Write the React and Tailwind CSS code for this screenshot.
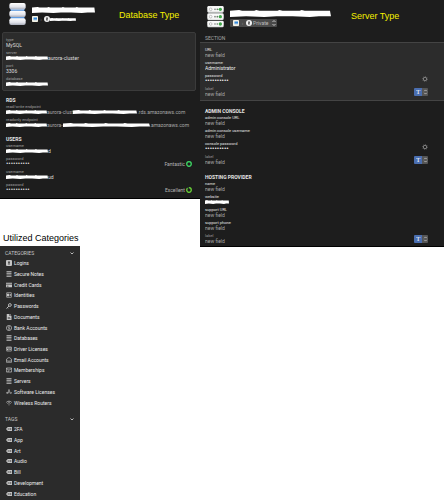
const CATEGORIES = [
  ['Logins', 'login'],
  ['Secure Notes', 'rows'],
  ['Credit Cards', 'card'],
  ['Identities', 'identity'],
  ['Passwords', 'key'],
  ['Documents', 'document'],
  ['Bank Accounts', 'bank'],
  ['Databases', 'rows'],
  ['Driver Licenses', 'license'],
  ['Email Accounts', 'email'],
  ['Memberships', 'membership'],
  ['Servers', 'rows'],
  ['Software Licenses', 'software'],
  ['Wireless Routers', 'wifi'],
];

const TAGS = ['2FA', 'App', 'Art', 'Audio', 'Bill', 'Development', 'Education'];

const ICONS = {
  login: (
    <path fill="currentColor" fillRule="evenodd" d="M2 0h8a2 2 0 012 2v8a2 2 0 01-2 2H2a2 2 0 01-2-2V2a2 2 0 012-2zm4 2.5A2 2 0 005 6v3.5h2V6a2 2 0 00-1-3.500z" />
  ),
  rows: (
    <path fill="currentColor" opacity="0.75" d="M1 0h10v3H1zM1 4h10v2H1zM1 7h10v2H1zM1 10h10v2H1z" />
  ),
  card: <path fill="currentColor" fillRule="evenodd" d="M0 1.500h12V3.500H0zM0 5h12v5.500H0zM1.500 7.500V9H5V7.500z" />,
  identity: (
    <>
      <rect x="0.700" y="1.500" width="10.600" height="9" rx="1" fill="none" stroke="currentColor" strokeWidth="1.400" />
      <path fill="currentColor" d="M2 3.500h4v5H2zM7 4h3v1.300H7zM7 6.500h3v1.300H7z" />
    </>
  ),
  key: (
    <>
      <circle cx="7.800" cy="4" r="2.800" fill="none" stroke="currentColor" strokeWidth="1.800" />
      <path d="M6 6L1 11M3 9.500l1.500 1.300" stroke="currentColor" strokeWidth="1.800" fill="none" />
    </>
  ),
  document: <path fill="currentColor" fillRule="evenodd" d="M1.500 0H7v4h4v8H1.500zM8 0l3 3H8zM3.500 6v1H8V6zm0 2.500v1H9v-1z" />,
  bank: (
    <>
      <circle cx="6" cy="6" r="5.200" fill="none" stroke="currentColor" strokeWidth="1.400" />
      <path d="M8 4.200C7 3 4.200 3.300 4.400 4.800c.2 1.500 3.300 1 3.300 2.600 0 1.400-2.700 1.500-3.700.4M6 2.300v7.400" fill="none" stroke="currentColor" strokeWidth="1.100" />
    </>
  ),
  license: (
    <>
      <rect x="0.700" y="2" width="10.600" height="8" rx="1" fill="none" stroke="currentColor" strokeWidth="1.400" />
      <path fill="currentColor" d="M1 3h10v2H1zM2 6h3v2.500H2zM6.500 6.500H10v1.500H6.500z" />
    </>
  ),
  email: (
    <path d="M.8 10.500V6C1.500 3 4 1.300 6 1.300S10.500 3 11.200 6v4.500zM1 6.500c2 2.500 8 2.500 10 0" fill="none" stroke="currentColor" strokeWidth="1.400" />
  ),
  membership: (
    <path d="M.8 2h10.400v8H.8zM1 3l5 3.500L11 3M3 8.300h3" fill="none" stroke="currentColor" strokeWidth="1.400" />
  ),
  software: (
    <path d="M6.800 1L2 10M5.200 1L10 10M0 7.500h7M9.500 7.500H12" fill="none" stroke="currentColor" strokeWidth="1.300" />
  ),
  wifi: (
    <path d="M.6 4.800C3.500 1.500 8.500 1.500 11.400 4.800M2.800 7C4.700 5 7.300 5 9.200 7M5 9.600h2" fill="none" stroke="currentColor" strokeWidth="1.500" />
  ),
  tag: (
    <path fill="currentColor" fillRule="evenodd" d="M3.500 2H12v8H3.500L0 6zM3.500 5v2h2V5zM7 4.500v1h3.500v-1zM7 6.500v1h3.500v-1z" />
  ),
};

function Icon({ name }) {
  return (
    <svg className="w-[6px] h-[6px] shrink-0 text-[#c4c4c4]" viewBox="0 0 12 12" aria-hidden="true">
      {ICONS[name]}
    </svg>
  );
}

/* White marker stroke that hides a private value */
function Redaction({ className }) {
  return (
    <svg className={`shrink-0 ${className}`} viewBox="0 0 100 10" preserveAspectRatio="none" aria-hidden="true">
      <path fill="#fff" d="M0 1l9-1 3 1 12 0 2-1 3 1 18 0 2-1 3 1 17 0 2-1 3 1 18 0 7 0 1 8-12 0-9 1-17-1-16 0-12 1-18-1-17 1z" />
    </svg>
  );
}

function Chevrons({ className }) {
  return (
    <svg className={`pointer-events-none ${className}`} viewBox="0 0 6 8" fill="none" stroke="#c8c8c8" strokeWidth="1" aria-hidden="true">
      <path d="M1.500 3L3 1.500 4.500 3M1.500 5L3 6.500 4.500 5" />
    </svg>
  );
}

function VaultIcon() {
  return (
    <svg className="w-[6px] h-[6px] shrink-0" viewBox="0 0 12 12" aria-hidden="true">
      <rect width="12" height="12" rx="1.500" fill="#f5f2e4" />
      <rect x="3" y="3" width="7" height="4.500" fill="#3388dc" />
      <rect x="3" y="7.500" width="7" height="1.500" fill="#b7d4ee" />
    </svg>
  );
}

function KeyholeIcon() {
  return (
    <svg className="w-[6px] h-[6px] shrink-0" viewBox="0 0 12 12" aria-hidden="true">
      <circle cx="6" cy="6" r="6" fill="#f2f2f2" />
      <path fill="#333" d="M4.500 3h3v2.500L7 6.500 7.500 9h-3V6.500l.5-1-.5-.5z" />
    </svg>
  );
}

function DatabaseLogo() {
  return (
    <svg className="w-[17px] h-[22px] shrink-0" viewBox="0 0 51 66" aria-hidden="true">
      <defs>
        <linearGradient id="disk" x1="0" x2="0" y1="0" y2="1">
          <stop offset="0" stopColor="#fff" />
          <stop offset="0.600" stopColor="#e2e4ec" />
          <stop offset="1" stopColor="#a9adba" />
        </linearGradient>
      </defs>
      <path fill="#4c8fdc" d="M5 14h41v44H5z" />
      <path fill="#9fc4ee" d="M5 18h41v3H5zM5 40h41v3H5z" />
      <rect x="1" y="0" width="49" height="19" rx="6" fill="url(#disk)" />
      <rect x="1" y="23" width="49" height="19" rx="6" fill="url(#disk)" />
      <rect x="1" y="46" width="49" height="20" rx="6" fill="url(#disk)" />
    </svg>
  );
}

function ServerLogo() {
  return (
    <svg className="w-[17px] h-[22px] shrink-0" viewBox="0 0 51 66" aria-hidden="true">
      {[0, 22, 44].map((y) => (
        <g key={y}>
          <rect x="1" y={y} width="49" height="20" rx="4" fill="#e4e6e5" />
          <rect x="2" y={y + 1} width="47" height="15" rx="4" fill="#fafafa" />
          <circle cx="11" cy={y + 10} r="4" fill="#fff" stroke="#a5a5a5" strokeWidth="2" />
          <circle cx="24" cy={y + 10} r="2.500" fill="#7d7d7d" />
          <circle cx="31" cy={y + 10} r="2.500" fill="#5f7f60" />
          <circle cx="40" cy={y + 10} r="5" fill="#3fa648" />
        </g>
      ))}
    </svg>
  );
}

function StrengthRing({ level }) {
  return (
    <svg className="w-[6px] h-[6px]" viewBox="0 0 12 12" fill="none" aria-hidden="true">
      <circle cx="6" cy="6" r="4.600" stroke="#24502f" strokeWidth="2.400" />
      <circle cx="6" cy="6" r="4.600" stroke={level === 'Fantastic' ? '#3ed765' : '#6fd336'} strokeWidth="2.400" pathLength="100" strokeDasharray={level === 'Fantastic' ? '100 0' : '82 18'} transform="rotate(-90 6 6)" />
    </svg>
  );
}

/* Read-only label + value pair */
function Field({ label, strength, children }) {
  return (
    <div className="pb-[2px]">
      <dt className="text-[4px] leading-[5px] text-[#a2a2a2]">{label}</dt>
      <dd className="flex items-center h-[6px] text-[5px] leading-[6px] text-[#dedede] whitespace-nowrap">
        {children}
        {strength && (
          <span className="ml-auto flex items-center gap-[1px] text-[#b4b4b4]">
            {strength}
            <StrengthRing level={strength} />
          </span>
        )}
      </dd>
    </div>
  );
}

/* Editable field of the server form */
function EditField({ id, label, value, type = 'text', custom }) {
  return (
    <div className="flex items-center pb-[2px]">
      <div className="flex-1 min-w-0">
        <label htmlFor={id} className={`block text-[4px] leading-[5px] ${custom ? 'text-[#9a9a9a]' : 'text-[#e4e4e4]'}`}>
          {label}
        </label>
        {value === 'redacted' ? (
          <div id={id} className="flex items-center h-[6px]">
            <Redaction className="w-[24px] h-[4px]" />
          </div>
        ) : (
          <input
            id={id}
            type="text"
            defaultValue={value}
            placeholder="new field"
            className={`block w-full h-[6px] p-0 bg-transparent leading-[6px] text-[#f0f0f0] placeholder:text-[#a8a8a8] outline-none ${type === 'password' ? 'text-[7px]' : 'text-[5px]'}`}
          />
        )}
      </div>
      {type === 'password' && (
        <button type="button" aria-label={`Options for ${label}`} className="mr-4 shrink-0">
          <svg className="w-[6px] h-[6px]" viewBox="0 0 12 12" fill="none" stroke="#8c8c8c" aria-hidden="true">
            <circle cx="6" cy="6" r="3.500" strokeWidth="1.800" />
            <circle cx="6" cy="6" r="5" strokeWidth="1.200" strokeDasharray="1.500 2.400" />
          </svg>
        </button>
      )}
      {custom && (
        <div className="relative mr-4 w-[14px] h-2 shrink-0 rounded-[1px] overflow-hidden">
          <select aria-label={`Type of ${id}`} className="block appearance-none w-full h-full pl-[2px] bg-linear-to-r from-[#4a6eb0] from-60% to-[#555] to-60% font-['Liberation_Serif',serif] text-[7px] leading-[8px] text-white">
            <option>T</option>
          </select>
          <Chevrons className="absolute right-0 top-0 w-[5px] h-2" />
        </div>
      )}
    </div>
  );
}

function SectionTitle({ children }) {
  return <h3 className="text-[5px] leading-[8px] font-bold text-[#e6e6e6]">{children}</h3>;
}

const DOTS = '••••••••••';

function DatabasePanel() {
  return (
    <section className="bg-[#1d1d1d] pb-[3px] border-b border-black">
      <header className="flex items-start pt-[3px] pl-[9px] h-8">
        <DatabaseLogo />
        <div className="ml-[6px] pt-1">
          <Redaction className="w-[63px] h-[6px]" />
          <div className="flex items-center mt-[3px]">
            <VaultIcon />
            <span className="w-[6px] text-center text-[5px] leading-[6px] text-[#777]">›</span>
            <KeyholeIcon />
            <Redaction className="w-[26px] h-[3px]" />
          </div>
        </div>
        <h2 className="ml-6 pt-[6px] text-[9px] leading-[12px] text-[#f4f000] font-['Liberation_Sans',sans-serif] whitespace-nowrap">Database Type</h2>
      </header>

      <dl className="ml-[2px] mr-1 px-[3px] pt-1 pb-[1px] rounded-[2px] bg-[#2c2c2c] border border-[#3b3b3b]">
        <Field label="type">MySQL</Field>
        <Field label="server">
          <Redaction className="w-[42px] h-[4px]" />
          aurora-cluster
        </Field>
        <Field label="port">3306</Field>
        <Field label="database">
          <Redaction className="w-[42px] h-[4px]" />
        </Field>
      </dl>

      <div className="pl-[6px] pr-2 pt-[5px]">
        <SectionTitle>RDS</SectionTitle>
        <dl>
          <Field label="read/write endpoint">
            <Redaction className="w-[41px] h-[4px]" />
            <span className="text-[#a8a8a8]">aurora-clust</span>
            <Redaction className="w-[64px] h-[4px]" />
            <span className="text-[#a8a8a8]">.rds.amazonaws.com</span>
          </Field>
          <Field label="readonly endpoint">
            <Redaction className="w-[41px] h-[4px]" />
            <span className="text-[#a8a8a8]">aurora-</span>
            <Redaction className="w-[87px] h-[4px]" />
            <span className="text-[#a8a8a8]">.amazonaws.com</span>
          </Field>
        </dl>
        <div className="pt-[5px]">
          <SectionTitle>USERS</SectionTitle>
        </div>
        <dl>
          <Field label="username">
            <Redaction className="w-[42px] h-[4px]" />d
          </Field>
          <Field label="password" strength="Fantastic">
            <span className="text-[7px] leading-[6px]">{DOTS}</span>
          </Field>
          <Field label="username">
            <Redaction className="w-[42px] h-[4px]" />ud
          </Field>
          <Field label="password" strength="Excellent">
            <span className="text-[7px] leading-[6px]">{DOTS}</span>
          </Field>
        </dl>
      </div>
    </section>
  );
}

function ServerPanel() {
  return (
    <section className="bg-[#1d1d1d] border-b border-black">
      <header className="flex items-start pt-[6px] pl-[7px]">
        <ServerLogo />
        <div className="ml-[6px] pt-1">
          <Redaction className="w-[101px] h-[7px]" />
          <div className="relative flex items-center mt-[2px] w-[47px] h-2 rounded-[1px] bg-[#4a4a4a]">
            <span className="absolute left-[3px] flex items-center pointer-events-none">
              <VaultIcon />
              <span className="w-[7px] text-center text-[5px] leading-[6px] text-[#888]">›</span>
              <KeyholeIcon />
            </span>
            <select aria-label="Vault" className="block appearance-none w-full h-full pl-[23px] bg-transparent text-[5px] leading-[8px] text-[#bdbdbd]">
              <option>Private</option>
            </select>
            <Chevrons className="absolute right-0 w-[6px] h-2" />
          </div>
        </div>
        <h2 className="ml-5 pt-1 text-[9px] leading-[12px] text-[#f4f000] font-['Liberation_Sans',sans-serif] whitespace-nowrap">Server Type</h2>
      </header>
      <h3 className="mt-[6px] pl-[5px] text-[5px] leading-[8px] text-[#a6a6a6]">SECTION</h3>

      <div className="border-y border-[#444] bg-[#2c2c2c] pl-[5px] pt-1 pb-[1px]">
        <EditField id="url" label="URL" />
        <EditField id="username" label="username" value="Administrator" />
        <EditField id="password" label="password" value={DOTS} type="password" />
        <EditField id="section-label" label="label" custom />
      </div>

      <div className="pl-[5px] pt-[6px]">
        <SectionTitle>ADMIN CONSOLE</SectionTitle>
        <EditField id="console-url" label="admin console URL" />
        <EditField id="console-username" label="admin console username" />
        <EditField id="console-password" label="console password" value={DOTS} type="password" />
        <EditField id="console-label" label="label" custom />
      </div>

      <div className="pl-[5px] pt-[6px]">
        <SectionTitle>HOSTING PROVIDER</SectionTitle>
        <EditField id="name" label="name" />
        <EditField id="website" label="website" value="redacted" />
        <EditField id="support-url" label="support URL" />
        <EditField id="support-phone" label="support phone" />
        <EditField id="hosting-label" label="label" custom />
      </div>
    </section>
  );
}

function GroupHeader({ children }) {
  return (
    <h3>
      <button type="button" className="flex w-full items-center justify-between h-[10px] pl-[5px] pr-[6px] text-[5px] leading-[10px] text-[#c6c6c6]">
        {children}
        <svg className="w-[4px] h-[3px]" viewBox="0 0 8 6" fill="none" stroke="#bbb" strokeWidth="2" aria-hidden="true">
          <path d="M1 1l3 3 3-3" />
        </svg>
      </button>
    </h3>
  );
}

function SidebarItem({ icon, children }) {
  return (
    <li className="flex">
      <a href="#" className="flex w-full items-center gap-[2px] pl-[6px] text-[5px] leading-[6px] text-[#ececec] whitespace-nowrap">
        <Icon name={icon} />
        {children}
      </a>
    </li>
  );
}

function Sidebar() {
  return (
    <nav className="flex flex-col flex-1 w-20 pt-[2px] pb-[1px] bg-[#2b2b2b]">
      <GroupHeader>CATEGORIES</GroupHeader>
      <ul className="grid auto-rows-fr grow-2 basis-0">
        {CATEGORIES.map(([name, icon]) => (
          <SidebarItem key={name} icon={icon}>{name}</SidebarItem>
        ))}
      </ul>
      <div className="pt-[6px]">
        <GroupHeader>TAGS</GroupHeader>
      </div>
      <ul className="grid auto-rows-fr grow basis-0">
        {TAGS.map((tag) => (
          <SidebarItem key={tag} icon="tag">{tag}</SidebarItem>
        ))}
      </ul>
    </nav>
  );
}

export default function App() {
  return (
    <main className="grid grid-cols-[200px_1fr] items-start min-h-screen bg-white font-[Roboto,sans-serif]">
      <div className="flex flex-col min-h-screen">
        <DatabasePanel />
        <h2 className="pt-[33px] pb-[2px] pl-[3px] text-[9px] leading-[12px] text-black font-['Liberation_Sans',sans-serif]">Utilized Categories</h2>
        <Sidebar />
      </div>
      <ServerPanel />
    </main>
  );
}
